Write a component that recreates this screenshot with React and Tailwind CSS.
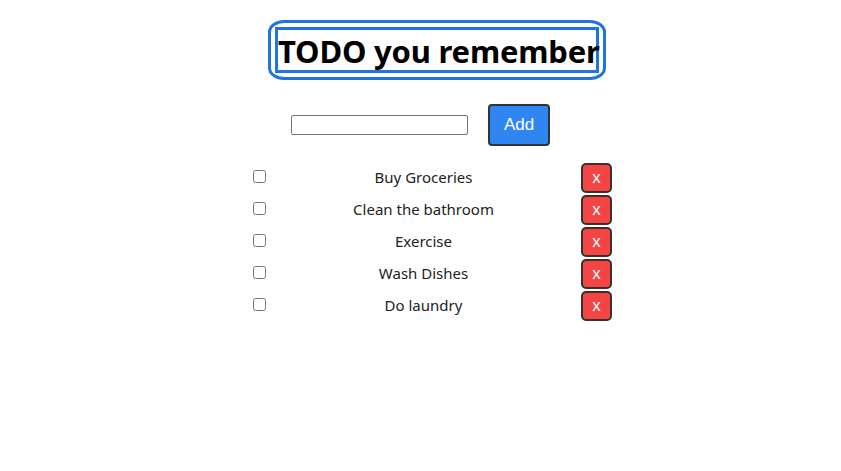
import React, { useState } from "react";

const initial = ["Buy Groceries", "Clean the bathroom", "Exercise", "Wash Dishes", "Do laundry"];

export default function App() {
  const [todos, setTodos] = useState(initial);
  const [text, setText] = useState("");

  const add = () => {
    if (!text.trim()) return;
    setTodos([...todos, text.trim()]);
    setText("");
  };

  return (
    <div className="flex min-h-[471px] flex-col items-center bg-white pt-5 font-['Noto_Sans',sans-serif] text-black">
      {/* title */}
      <div className="ml-[33px] w-[338px] rounded-[16px/12px] border-[3px] border-[#1f74df] px-1 py-1">
        <h1 className="h-[46px] whitespace-nowrap border-[3px] border-[#1f74df] pt-[2px] text-center text-[31px] font-bold leading-[38px] tracking-[-0.2px]">
          TODO you remember
        </h1>
      </div>

      {/* input */}
      <div className="mt-6 flex items-center gap-5">
        <input
          value={text}
          onChange={(e) => setText(e.target.value)}
          className="h-[20px] w-[177px] rounded-[2px] border border-[#767676] px-1 text-sm"
        />
        <button
          onClick={add}
          className="h-[42px] w-[62px] rounded-[4px] border-2 border-[#333] bg-[#2f86f1] font-['Liberation_Sans',sans-serif] text-[17px] text-white"
        >
          Add
        </button>
      </div>

      {/* list */}
      <ul className="mt-[17px] ml-[22px] flex w-[361px] flex-col">
        {todos.map((t, i) => (
          <li key={i} className="flex h-[32px] items-start">
            <input type="checkbox" className="mt-[7px] ml-[2px] h-[13px] w-[13px]" />
            <span className="flex-1 text-center text-[15px] leading-[28px] text-[#222]">{t}</span>
            <button
              onClick={() => setTodos(todos.filter((_, j) => j !== i))}
              className="h-[30px] w-[31px] rounded-[5px] border-2 border-[#333] bg-[#f44444] font-['Liberation_Sans',sans-serif] text-[17px] text-white"
            >
              x
            </button>
          </li>
        ))}
      </ul>
    </div>
  );
}
